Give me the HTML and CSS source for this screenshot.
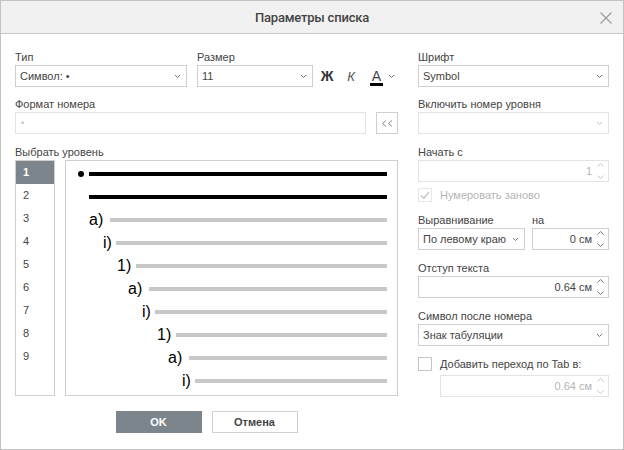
FILE: index.html
```html
<!DOCTYPE html>
<html lang="ru">
<head>
<meta charset="utf-8">
<title>Параметры списка</title>
<link rel="stylesheet" href="styles.css">
</head>
<body>
<div class="dialog">
  <div class="header">
    <span class="title">Параметры списка</span>
    <svg class="close" width="12" height="12" viewBox="0 0 12 12"><path d="M0.5 0.5 L11.5 11.5 M11.5 0.5 L0.5 11.5" stroke="#9a9a9a" stroke-width="1.1" fill="none"/></svg>
  </div>
  <div class="body">
    <div class="main">
      <div class="col-left">
        <div class="top-row">
          <div class="field w-type">
            <div class="label">Тип</div>
            <div class="control select"><span class="value">Символ: •</span><svg class="caret" width="7" height="5" viewBox="0 0 7 5"><path d="M1 1 L3.5 3.5 L6 1" stroke="#777" fill="none"/></svg></div>
          </div>
          <div class="field w-size">
            <div class="label">Размер</div>
            <div class="control select"><span class="value">11</span><svg class="caret" width="7" height="5" viewBox="0 0 7 5"><path d="M1 1 L3.5 3.5 L6 1" stroke="#777" fill="none"/></svg></div>
          </div>
          <div class="fmt">
            <span class="fmt-b">Ж</span>
            <span class="fmt-i">К</span>
            <span class="fmt-color"><span class="fmt-a">A</span><svg class="caret" width="7" height="5" viewBox="0 0 7 5"><path d="M1 1 L3.5 3.5 L6 1" stroke="#777" fill="none"/></svg></span>
          </div>
        </div>

        <div class="group g2">
          <div class="label">Формат номера</div>
          <div class="format-row">
            <div class="control disabled w-format"><span class="value dim-dot">•</span></div>
            <div class="ico-btn"><svg width="12" height="7" viewBox="0 0 12 7"><path d="M5 0.5 L1.5 3.5 L5 6.5 M11 0.5 L7.5 3.5 L11 6.5" stroke="#8a8a8a" fill="none"/></svg></div>
          </div>
        </div>

        <div class="group g3">
          <div class="label">Выбрать уровень</div>
          <div class="level-row">
            <div class="levels">
              <div class="lvl sel">1</div>
              <div class="lvl">2</div>
              <div class="lvl">3</div>
              <div class="lvl">4</div>
              <div class="lvl">5</div>
              <div class="lvl">6</div>
              <div class="lvl">7</div>
              <div class="lvl">8</div>
              <div class="lvl">9</div>
            </div>
            <div class="preview">
              <div class="prow p-dot"><span class="dot"></span><span class="pline dark"></span></div>
              <div class="prow p-cont"><span class="pline dark"></span></div>
              <div class="prow p3"><span class="pnum n-a">a)</span><span class="pline"></span></div>
              <div class="prow p4"><span class="pnum n-i">i)</span><span class="pline"></span></div>
              <div class="prow p5"><span class="pnum n-1">1)</span><span class="pline"></span></div>
              <div class="prow p6"><span class="pnum n-a">a)</span><span class="pline"></span></div>
              <div class="prow p7"><span class="pnum n-i">i)</span><span class="pline"></span></div>
              <div class="prow p8"><span class="pnum n-1">1)</span><span class="pline"></span></div>
              <div class="prow p9"><span class="pnum n-a">a)</span><span class="pline"></span></div>
              <div class="prow p10"><span class="pnum n-i">i)</span><span class="pline"></span></div>
            </div>
          </div>
        </div>
      </div>

      <div class="col-right">
        <div class="field">
          <div class="label">Шрифт</div>
          <div class="control select"><span class="value">Symbol</span><svg class="caret" width="7" height="5" viewBox="0 0 7 5"><path d="M1 1 L3.5 3.5 L6 1" stroke="#777" fill="none"/></svg></div>
        </div>
        <div class="group g2">
          <div class="label">Включить номер уровня</div>
          <div class="control select disabled"><span class="value"></span><svg class="caret" width="7" height="5" viewBox="0 0 7 5"><path d="M1 1 L3.5 3.5 L6 1" stroke="#c4c4c4" fill="none"/></svg></div>
        </div>
        <div class="group g3">
          <div class="label">Начать с</div>
          <div class="control num disabled"><span class="value">1</span><svg class="spin" width="7" height="18" viewBox="0 0 7 18"><path d="M0.5 4.5 L3.5 1.5 L6.5 4.5 M0.5 13.5 L3.5 16.5 L6.5 13.5" stroke="#c4c4c4" fill="none"/></svg></div>
        </div>
        <div class="check-row disabled-text">
          <span class="cb cb-dis"><svg width="12" height="12" viewBox="0 0 12 12"><path d="M2 6.5 L4.8 9.2 L10 3" stroke="#c8c8c8" stroke-width="1.6" fill="none"/></svg></span>
          <span>Нумеровать заново</span>
        </div>
        <div class="group g-align">
          <div class="align-row">
            <div class="field w-align">
              <div class="label">Выравнивание</div>
              <div class="control select"><span class="value">По левому краю</span><svg class="caret" width="7" height="5" viewBox="0 0 7 5"><path d="M1 1 L3.5 3.5 L6 1" stroke="#777" fill="none"/></svg></div>
            </div>
            <div class="field w-at">
              <div class="label">на</div>
              <div class="control num"><span class="value">0 см</span><svg class="spin" width="7" height="18" viewBox="0 0 7 18"><path d="M0.5 4.5 L3.5 1.5 L6.5 4.5 M0.5 13.5 L3.5 16.5 L6.5 13.5" stroke="#777" fill="none"/></svg></div>
            </div>
          </div>
        </div>
        <div class="group g3">
          <div class="label">Отступ текста</div>
          <div class="control num"><span class="value">0.64 см</span><svg class="spin" width="7" height="18" viewBox="0 0 7 18"><path d="M0.5 4.5 L3.5 1.5 L6.5 4.5 M0.5 13.5 L3.5 16.5 L6.5 13.5" stroke="#777" fill="none"/></svg></div>
        </div>
        <div class="group g3">
          <div class="label">Символ после номера</div>
          <div class="control select"><span class="value">Знак табуляции</span><svg class="caret" width="7" height="5" viewBox="0 0 7 5"><path d="M1 1 L3.5 3.5 L6 1" stroke="#777" fill="none"/></svg></div>
        </div>
        <div class="check-row tab-row">
          <span class="cb"></span>
          <span>Добавить переход по Tab в:</span>
        </div>
        <div class="control num disabled tab-input"><span class="value">0.64 см</span><svg class="spin" width="7" height="18" viewBox="0 0 7 18"><path d="M0.5 4.5 L3.5 1.5 L6.5 4.5 M0.5 13.5 L3.5 16.5 L6.5 13.5" stroke="#c4c4c4" fill="none"/></svg></div>
      </div>
    </div>

    <div class="footer">
      <div class="btn btn-primary">OK</div>
      <div class="btn">Отмена</div>
    </div>
  </div>
</div>
</body>
</html>
```

FILE: styles.css
```css
html, body {
  margin: 0;
  padding: 0;
  background: #fff;
}

body {
  font-family: "Liberation Sans", Arial, sans-serif;
  font-size: 11px;
  color: #444;
}

.dialog {
  width: 624px;
  height: 450px;
  box-sizing: border-box;
  border: 1px solid #c2c2c2;
  background: #fff;
  display: flex;
  flex-direction: column;
}

.header {
  flex: none;
  height: 33px;
  box-sizing: border-box;
  padding-top: 1px;
  background: #f1f1f1;
  border-bottom: 1px solid #c8c8c8;
  display: grid;
  grid-template-columns: 1fr auto 1fr;
  align-items: center;
}

.title {
  grid-column: 2;
  font-family: Roboto, "Liberation Sans", sans-serif;
  font-weight: 500;
  font-size: 13px;
  color: #444;
  letter-spacing: -0.2px;
}

.close {
  grid-column: 3;
  justify-self: end;
  margin-right: 11px;
}

.body {
  flex: 1;
  padding: 17px 14px 0 14px;
}

.main {
  display: flex;
  gap: 20px;
}

.col-left {
  width: 383px;
}

.col-right {
  width: 191px;
}

.label {
  height: 12px;
  line-height: 12px;
  margin-bottom: 2px;
  white-space: nowrap;
  color: #444;
}

.control {
  height: 22px;
  box-sizing: border-box;
  border: 1px solid #cfcfcf;
  background: #fff;
  display: flex;
  align-items: center;
  padding: 0 5px 0 4px;
  color: #444;
  white-space: nowrap;
}

.control .value {
  flex: 1;
}

.control.disabled {
  border-color: #e3e3e3;
  color: #b5b5b5;
}

.caret {
  flex: none;
  display: block;
}

.num .value {
  text-align: right;
  margin-right: 5px;
}

.num {
  padding-right: 4px;
}

.spin {
  flex: none;
  display: block;
}

.top-row {
  display: flex;
  align-items: flex-end;
}

.w-type {
  width: 172px;
}

.w-size {
  width: 116px;
  margin-left: 10px;
}

.fmt {
  display: flex;
  align-items: center;
  height: 22px;
  margin-left: 3px;
}

.fmt-b {
  width: 22px;
  text-align: center;
  font-weight: bold;
  font-size: 14px;
  color: #333;
}

.fmt-i {
  width: 22px;
  margin-left: 2px;
  text-align: center;
  font-style: italic;
  font-size: 13px;
  color: #555;
}

.fmt-color {
  display: flex;
  align-items: center;
  margin-left: 8px;
}

.fmt-a {
  width: 13px;
  text-align: center;
  font-size: 14px;
  line-height: 13px;
  color: #444;
  border-bottom: 3px solid #000;
  margin-top: 3px;
}

.fmt-color .caret {
  margin-left: 5px;
}

.g2 {
  margin-top: 11px;
}

.g3 {
  margin-top: 12px;
}

.format-row {
  display: flex;
  gap: 10px;
}

.w-format {
  width: 351px;
}

.dim-dot {
  color: #c0c0c0;
  font-size: 9px;
  padding-left: 1px;
}

.ico-btn {
  width: 22px;
  height: 22px;
  box-sizing: border-box;
  border: 1px solid #cfcfcf;
  display: flex;
  align-items: center;
  justify-content: center;
}

.level-row {
  display: flex;
  gap: 10px;
}

.levels {
  width: 40px;
  height: 236px;
  box-sizing: border-box;
  border: 1px solid #cfcfcf;
}

.lvl {
  height: 23px;
  line-height: 23px;
  padding-left: 7px;
  color: #444;
}

.lvl.sel {
  background: #7d858c;
  color: #fff;
  font-weight: bold;
}

.preview {
  width: 333px;
  height: 236px;
  box-sizing: border-box;
  border: 1px solid #cfcfcf;
  padding: 1px 10px 0 0;
}

.prow {
  height: 23px;
  box-sizing: border-box;
  padding-top: 1px;
  display: flex;
  align-items: center;
}

.pline {
  flex: 1;
  height: 4px;
  background: #c8c8c8;
}

.pline.dark {
  background: #000;
}

.dot {
  width: 6px;
  height: 6px;
  border-radius: 50%;
  background: #000;
  margin-right: 5px;
}

.pnum {
  flex: none;
  font-size: 16px;
  line-height: 18px;
  color: #000;
}

.n-a { width: 21px; }
.n-i { width: 13px; }
.n-1 { width: 19px; }

.p-dot { padding-left: 12px; }
.p-cont { padding-left: 23px; }
.p3 { padding-left: 23px; }
.p4 { padding-left: 37px; }
.p5 { padding-left: 51px; }
.p6 { padding-left: 62px; }
.p7 { padding-left: 76px; }
.p8 { padding-left: 91px; }
.p9 { padding-left: 102px; }
.p10 { padding-left: 116px; }

.check-row {
  display: flex;
  align-items: center;
  height: 14px;
  margin-top: 6px;
  white-space: nowrap;
}

.disabled-text {
  color: #b5b5b5;
}

.cb {
  flex: none;
  width: 14px;
  height: 14px;
  box-sizing: border-box;
  border: 1px solid #c4c4c4;
  margin-right: 8px;
  display: flex;
  align-items: center;
  justify-content: center;
}

.cb-dis {
  border-color: #e6e6e6;
}

.align-row {
  display: flex;
  gap: 7px;
}

.g-align {
  margin-top: 12px;
}

.w-align {
  width: 107px;
}

.w-at {
  width: 77px;
}

.tab-row {
  margin-top: 11px;
}

.tab-input {
  margin-top: 4px;
  margin-left: 22px;
}

.footer {
  width: 383px;
  display: flex;
  justify-content: center;
  gap: 10px;
  margin-top: 14px;
}

.btn {
  width: 86px;
  height: 22px;
  box-sizing: border-box;
  border: 1px solid #cfcfcf;
  display: flex;
  align-items: center;
  justify-content: center;
  font-weight: bold;
  color: #444;
}

.btn-primary {
  background: #7d858c;
  border-color: #7d858c;
  color: #fff;
}
```
